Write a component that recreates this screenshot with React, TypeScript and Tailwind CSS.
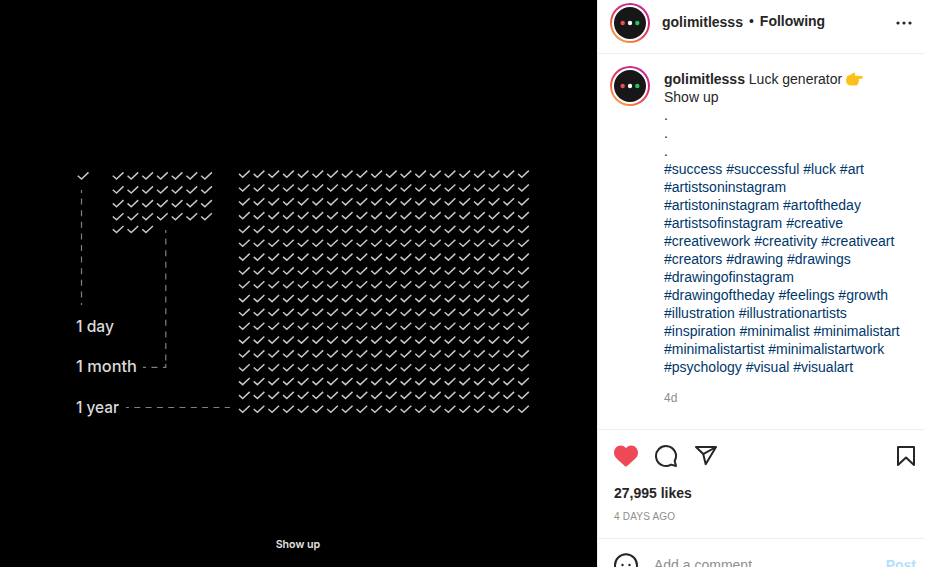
import React from "react";

const range = (n: number) => Array.from({ length: n }, (_, i) => i);

function Check({ x, y }: { x: number; y: number }) {
  return <path d={`M${x - 5.2} ${y - 0.3}l3.7 3.3 7-6.6`} />;
}

function Illustration() {
  const monthRows = [176, 190, 203.7, 216.8, 229.6];
  return (
    <svg
      className="block h-[567px] w-[597px] shrink-0 bg-black font-[Inter,'Liberation_Sans',sans-serif]"
      viewBox="0 0 597 567"
    >
      <g fill="none" stroke="#c8c8c8" strokeWidth="1.5">
        <Check x={83} y={176} />
        {monthRows.map((y, row) =>
          range(row === 4 ? 3 : 7).map((col) => (
            <Check key={`${row}-${col}`} x={118 + col * 14.73} y={y} />
          )),
        )}
        {range(18).map((row) =>
          range(20).map((col) => (
            <Check key={`${row}-${col}`} x={244.2 + col * 14.69} y={174.2 + row * 13.83} />
          )),
        )}
      </g>
      <g fill="none" stroke="#808080" strokeWidth="1.2">
        <path d="M81.5 190V305" strokeDasharray="6 5.6" strokeDashoffset="3" />
        <path d="M165.8 230V362" strokeDasharray="6 5.6" strokeDashoffset="3" />
        <path d="M143 367.300h3M151.500 367.300h6M163 367.300h3.300M165.800 364v3.500" />
        <path d="M126 407.500h104" strokeDasharray="6 5.300" strokeDashoffset="3" />
      </g>
      <g fill="#dadada" fontSize="16.500" fontWeight="500">
        <text x="76" y="331.500" textLength="38" lengthAdjust="spacingAndGlyphs">1 day</text>
        <text x="76" y="372.300" textLength="61" lengthAdjust="spacingAndGlyphs">1 month</text>
        <text x="76" y="412.500" textLength="43" lengthAdjust="spacingAndGlyphs">1 year</text>
      </g>
      <text x="275.700" y="548.300" fill="#e2e2e2" fontSize="11" fontWeight="600" textLength="44.500" lengthAdjust="spacingAndGlyphs">
        Show up
      </text>
    </svg>
  );
}

function Avatar() {
  return (
    <span className="flex size-10 shrink-0 items-center justify-center rounded-full bg-[linear-gradient(35deg,#fbad50_5%,#f58542_22%,#e64552_45%,#cc2b83_68%,#c92199_95%)]">
      <span className="flex size-9 items-center justify-center rounded-full bg-white">
        <svg className="size-8" viewBox="0 0 32 32">
          <circle cx="16" cy="16" r="16" fill="#171717" />
          <circle cx="8.7" cy="16" r="2.2" fill="#ee4e5b" />
          <circle cx="16" cy="16" r="2.2" fill="#fff" />
          <circle cx="23.300" cy="16" r="2.200" fill="#28c45c" />
        </svg>
      </span>
    </span>
  );
}

function PointingHand() {
  return (
    <svg className="ml-1 inline-block h-[18px] w-[17px] align-top" viewBox="0 0 17 18">
      <path
        d="M.2 8.600C.5 6.400 2.500 5.300 4.700 4.400L7.800 2.800C8.900 2.300 9.700 3.300 9.200 4.200L8.300 5.500L15.500 6C17.400 6.200 17.400 8.700 15.500 8.800L12.200 9C13.200 9.700 13.200 10.900 12.400 11.400C13 12.300 12.500 13.300 11.700 13.500C11.900 14.800 11 15.600 9.700 15.600H5.500C2.200 15.600 0 13.700 0 10.800Z"
        fill="#fcc21b"
      />
      <path d="M12.200 9H9M12.400 11.400H9.200M11.700 13.500H9M8.300 5.500L7 7" fill="none" stroke="#f8ad1d" strokeWidth=".7" strokeLinecap="round" />
    </svg>
  );
}

const hashtags = [
  "#success #successful #luck #art",
  "#artistsoninstagram",
  "#artistoninstagram #artoftheday",
  "#artistsofinstagram #creative",
  "#creativework #creativity #creativeart",
  "#creators #drawing #drawings",
  "#drawingofinstagram",
  "#drawingoftheday #feelings #growth",
  "#illustration #illustrationartists",
  "#inspiration #minimalist #minimalistart",
  "#minimalistartist #minimalistartwork",
  "#psychology #visual #visualart",
];

export default function App() {
  return (
    <div className="flex h-[567px] w-[925px] overflow-hidden bg-white font-['Liberation_Sans',Arial,sans-serif] text-sm leading-[18px] text-[#262626]">
      <Illustration />
      <aside className="flex w-[328px] flex-col border-l border-[#efefef]">
        <header className="flex h-[54px] shrink-0 items-start border-b border-[#efefef] pt-[3px] pr-[13px] pl-3">
          <Avatar />
          <div className="ml-3 flex pt-[9px]">
            <b className="pt-px">golimitlesss</b>
            <span className="mx-[6px]">•</span>
            <b>Following</b>
          </div>
          <svg className="mt-[12px] ml-auto h-4 w-4" viewBox="0 0 16 16" fill="#262626">
            <circle cx="2" cy="8" r="1.600" />
            <circle cx="8" cy="8" r="1.600" />
            <circle cx="14" cy="8" r="1.600" />
          </svg>
        </header>
        <section className="flex h-[376px] shrink-0 items-start border-b border-[#efefef] pt-3 pl-3">
          <Avatar />
          <div className="ml-[14px] pt-1 whitespace-nowrap">
            <p className="h-[18px]"><b>golimitlesss</b> Luck generator<PointingHand /></p>
            <p>Show up</p>
            <p>.</p>
            <p>.</p>
            <p>.</p>
            {hashtags.map((line) => (
              <p key={line} className="text-[#00376b]">{line}</p>
            ))}
            <time className="mt-[13px] block text-xs leading-[18px] text-[#8e8e8e]">4d</time>
          </div>
        </section>
        <section className="h-[109px] shrink-0 border-b border-[#efefef] pt-[14px] pr-[7px] pl-4">
          <div className="flex gap-4">
            <svg className="size-6" viewBox="0 0 48 48" fill="#ed4956">
              <path d="M34.6 3.1c-4.5 0-7.9 1.8-10.6 5.6-2.7-3.700-6.100-5.500-10.600-5.500C6 3.100 0 9.600 0 17.600c0 7.300 5.400 12 10.600 16.500.6.5 1.300 1.100 1.900 1.700l2.300 2c4.400 3.900 6.600 5.900 7.600 6.500.5.3 1.100.5 1.600.5s1.100-.2 1.600-.5c1-.6 2.800-2.200 7.800-6.800l2-1.800c.7-.6 1.300-1.200 2-1.700C42.700 29.600 48 25 48 17.600c0-8-6-14.500-13.400-14.500z" />
            </svg>
            <svg className="size-6" viewBox="0 0 24 24" fill="none" stroke="#262626" strokeWidth="2" strokeLinejoin="round">
              <path d="M20.656 17.008a9.993 9.993 0 1 0-3.590 3.615L22 22Z" />
            </svg>
            <svg className="size-6" viewBox="0 0 24 24" fill="none" stroke="#262626" strokeWidth="2" strokeLinejoin="round">
              <path d="M22 3 9.218 10.083M11.698 20.334 22 3.001H2l7.218 7.083Z" />
            </svg>
            <svg className="ml-auto size-6" viewBox="0 0 24 24" fill="none" stroke="#262626" strokeWidth="2" strokeLinejoin="round">
              <path d="M20 21l-8-7.560L4 21V3h16Z" />
            </svg>
          </div>
          <b className="mt-4 block">27,995 likes</b>
          <time className="mt-[6px] block text-[10px] leading-[18px] tracking-[0.2px] text-[#8e8e8e]">4 DAYS AGO</time>
        </section>
        <footer className="flex h-[56px] shrink-0 items-start pt-[14px] pr-[9px] pl-4">
          <svg className="size-6" viewBox="0 0 24 24" fill="none" stroke="#262626" strokeWidth="2">
            <circle cx="12" cy="12.3" r="11" />
            <path d="M6.500 14.500a6 6 0 0 0 11 0" />
            <circle cx="8.500" cy="12" r="1.200" fill="#262626" stroke="none" />
            <circle cx="15.500" cy="12" r="1.200" fill="#262626" stroke="none" />
          </svg>
          <span className="ml-4 pt-[3px] text-[#8e8e8e]">Add a comment…</span>
          <b className="ml-auto pt-[3px] text-[#b2dffc]">Post</b>
        </footer>
      </aside>
    </div>
  );
}
